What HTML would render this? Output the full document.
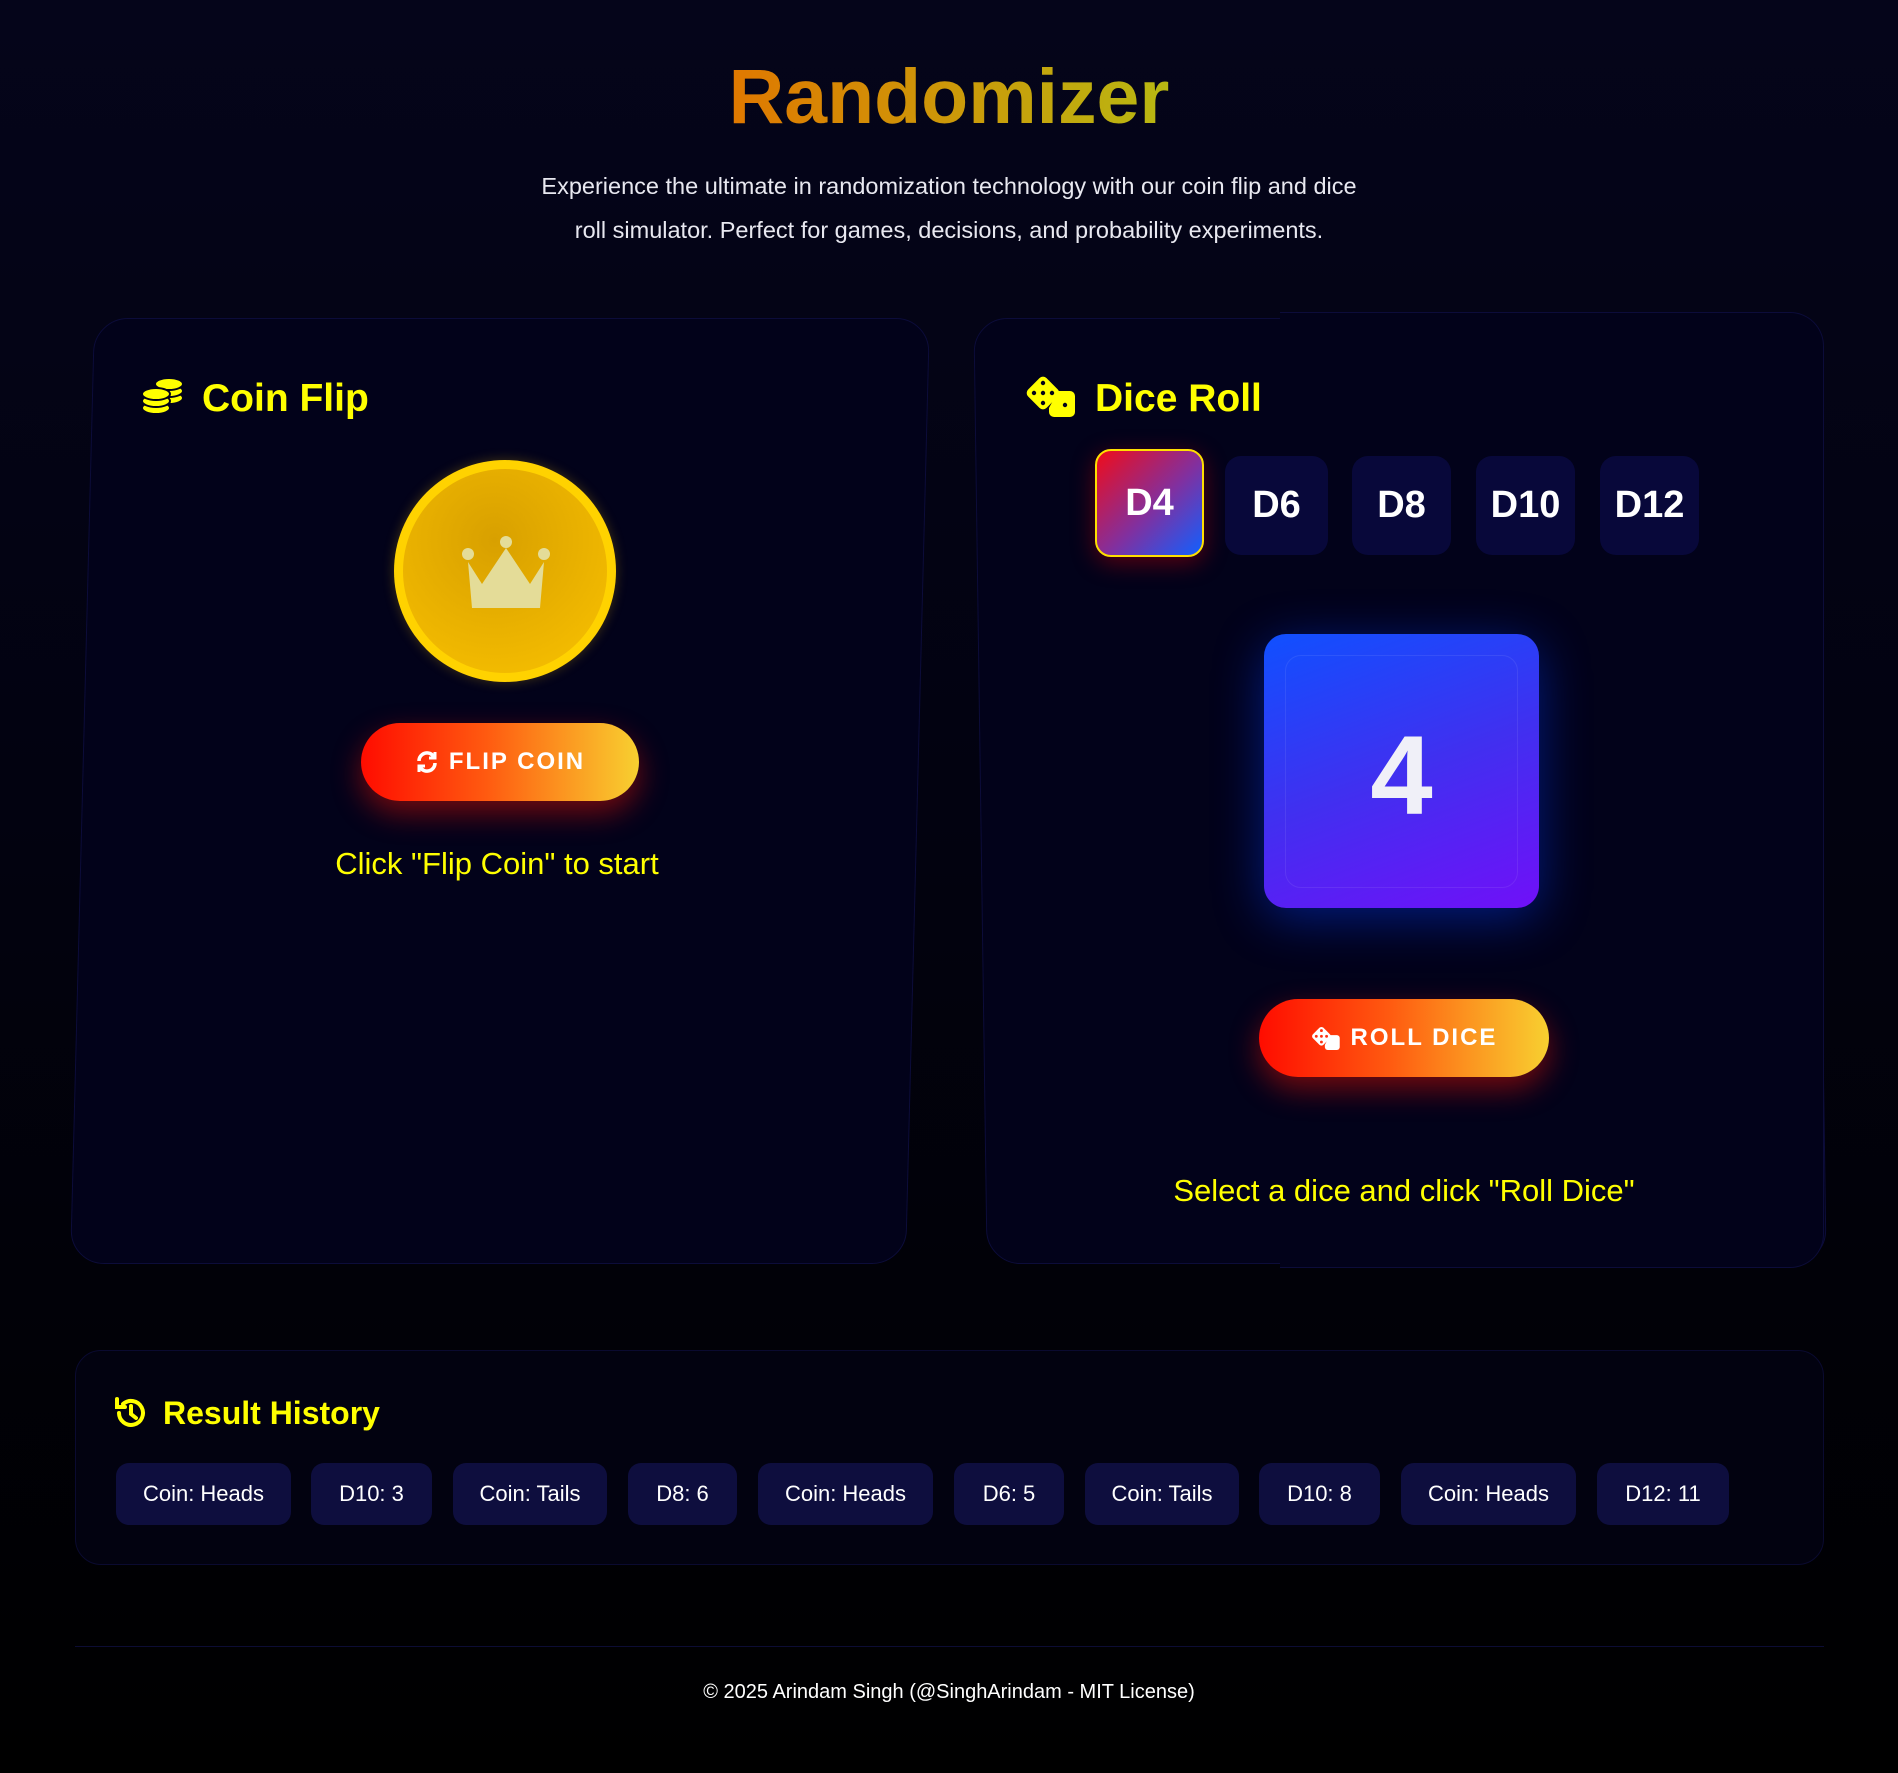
<!DOCTYPE html>
<html><head><meta charset="utf-8"><style>
*{margin:0;padding:0;box-sizing:border-box}
html,body{width:1898px;height:1773px;overflow:hidden}
body{background:linear-gradient(180deg,#05051a 0%,#020210 45%,#000 100%);font-family:"Liberation Sans",sans-serif;position:relative;color:#fff}
.a{position:absolute}
h1{position:absolute;left:0;width:1898px;top:52px;text-align:center;font-size:77px;font-weight:bold;line-height:90px}
h1 span{background:linear-gradient(90deg,#e07800,#b8b812);-webkit-background-clip:text;background-clip:text;color:transparent}
.sub{left:399px;width:1100px;top:164px;text-align:center;font-size:23.5px;line-height:44px;color:#e8e8f0;font-weight:300}
.card{background:#02021a;border:1.5px solid #0c0c3a;border-radius:34px}
.h2{font-size:39px;font-weight:bold;color:#ffff00;line-height:46px}
.btn{border-radius:40px;background:linear-gradient(90deg,#ff0c00,#ff5a10 45%,#f8d030);box-shadow:0 12px 30px rgba(255,20,0,.45);color:#fff;font-weight:bold;font-size:24px;letter-spacing:2px;display:flex;align-items:center;justify-content:center;gap:10px}
.dbtn{background:#08083a;border-radius:16px;color:#fff;font-weight:bold;font-size:38px;display:flex;align-items:center;justify-content:center}
.chip{position:absolute;top:1463px;height:62px;background:#0e0e3e;border-radius:13px;color:#fff;font-size:22px;display:flex;align-items:center;justify-content:center}
</style></head><body>
<h1><span>Randomizer</span></h1>
<div class="a sub">Experience the ultimate in randomization technology with our coin flip and dice<br>roll simulator. Perfect for games, decisions, and probability experiments.</div>

<!-- left card -->
<div class="a card" style="left:82px;top:318px;width:836px;height:946px;transform:skewX(-1.45deg)"></div>
<svg class="a" style="left:141px;top:374px" width="44" height="42" viewBox="0 0 44 42"><g fill="#ffff00" stroke="#02021a" stroke-width="2"><ellipse cx="28" cy="24" rx="14" ry="6"/><ellipse cx="28" cy="17" rx="14" ry="6"/><ellipse cx="28" cy="10" rx="14" ry="6"/><ellipse cx="15" cy="34" rx="14" ry="6"/><ellipse cx="15" cy="27" rx="14" ry="6"/><ellipse cx="15" cy="20" rx="14" ry="6"/></g></svg>
<div class="a h2" style="left:202px;top:376px">Coin Flip</div>
<div class="a" style="left:394px;top:460px;width:222px;height:222px;border-radius:50%;background:#ffd200;box-shadow:0 0 12px rgba(255,200,0,.25)"></div>
<div class="a" style="left:403px;top:469px;width:204px;height:204px;border-radius:50%;background:radial-gradient(circle at 45% 35%,#d8a000,#f0b800 70%,#f8c400)"></div>
<svg class="a" style="left:460px;top:534px" width="92" height="74" viewBox="0 0 92 74"><path d="M8 28 L22 50 L46 14 L70 50 L84 28 L80 74 L12 74 Z" fill="#e4dc98"/><circle cx="8" cy="20" r="6" fill="#e4dc98"/><circle cx="46" cy="8" r="6" fill="#e4dc98"/><circle cx="84" cy="20" r="6" fill="#e4dc98"/></svg>
<div class="a btn" style="left:361px;top:723px;width:278px;height:78px"><svg width="24" height="24" viewBox="0 0 24 24" fill="none" stroke="#fff" stroke-width="3.5"><path d="M4 11 A8 8 0 0 1 19 7"/><path d="M20 13 A8 8 0 0 1 5 17"/><path d="M20 2 v6 h-6" stroke-width="3"/><path d="M4 22 v-6 h6" stroke-width="3"/></svg>FLIP COIN</div>
<div class="a" style="left:197px;width:600px;top:846px;text-align:center;color:#ffff00;font-size:31px">Click "Flip Coin" to start</div>

<!-- right card -->
<div class="a card" style="left:980px;top:318px;width:840px;height:946px;transform:skewX(0.8deg)"></div>
<div class="a card" style="left:1280px;top:312px;width:544px;height:956px;border-left:none;border-radius:0 34px 34px 0"></div>
<svg class="a" style="left:1025px;top:375px" width="52" height="42" viewBox="0 0 52 42"><rect x="5" y="5" width="26" height="26" rx="5" fill="#ffff00" transform="rotate(45 18 18)"/><g fill="#02021a"><circle cx="18" cy="8" r="2.2"/><circle cx="9" cy="18" r="2.2"/><circle cx="18" cy="18" r="2.2"/><circle cx="27" cy="18" r="2.2"/><circle cx="18" cy="28" r="2.2"/></g><path d="M33 16 h12 a5 5 0 0 1 5 5 v16 a5 5 0 0 1 -5 5 h-16 a5 5 0 0 1 -5 -5 v-4 z" fill="#ffff00"/><circle cx="40" cy="30" r="2.2" fill="#02021a"/></svg>
<div class="a h2" style="left:1095px;top:376px">Dice Roll</div>
<div class="a dbtn" style="left:1095px;top:449px;width:109px;height:108px;background:linear-gradient(135deg,#f00c1a,#8030a0 55%,#1060ff);border:2px solid #ffe000;box-shadow:0 6px 24px rgba(255,0,0,.35)">D4</div>
<div class="a dbtn" style="left:1225px;top:456px;width:103px;height:99px">D6</div>
<div class="a dbtn" style="left:1352px;top:456px;width:99px;height:99px">D8</div>
<div class="a dbtn" style="left:1476px;top:456px;width:99px;height:99px">D10</div>
<div class="a dbtn" style="left:1600px;top:456px;width:99px;height:99px">D12</div>
<div class="a" style="left:1264px;top:634px;width:275px;height:274px;border-radius:22px;background:linear-gradient(160deg,#1050ff,#4030f0 50%,#7010f8);box-shadow:0 10px 50px rgba(0,60,255,.45)"></div>
<div class="a" style="left:1285px;top:655px;width:233px;height:233px;border-radius:16px;border:1.5px solid rgba(255,255,255,.08)"></div>
<div class="a" style="left:1264px;top:706px;width:275px;text-align:center;font-size:112px;font-weight:bold;line-height:140px;color:#f0f0f8">4</div>
<div class="a btn" style="left:1259px;top:999px;width:290px;height:78px"><svg width="30" height="24" viewBox="0 0 52 42"><rect x="5" y="5" width="26" height="26" rx="5" fill="#fff" transform="rotate(45 18 18)"/><g fill="#ff3010"><circle cx="18" cy="8" r="2.5"/><circle cx="9" cy="18" r="2.5"/><circle cx="18" cy="18" r="2.5"/><circle cx="27" cy="18" r="2.5"/><circle cx="18" cy="28" r="2.5"/></g><path d="M33 16 h12 a5 5 0 0 1 5 5 v16 a5 5 0 0 1 -5 5 h-16 a5 5 0 0 1 -5 -5 v-4 z" fill="#fff"/></svg>ROLL DICE</div>
<div class="a" style="left:1100px;width:608px;top:1173px;text-align:center;color:#ffff00;font-size:31px">Select a dice and click "Roll Dice"</div>

<!-- history -->
<div class="a" style="left:75px;top:1350px;width:1749px;height:215px;border:1.5px solid #0a0a30;border-radius:26px;background:#020210"></div>
<svg class="a" style="left:113px;top:1395px" width="36" height="36" viewBox="0 0 36 36" fill="none" stroke="#ffff00" stroke-width="4" stroke-linecap="round"><path d="M6 18 A12 12 0 1 0 10 9"/><path d="M4 4 v8 h8"/><path d="M18 11 v8 l5 4"/></svg>
<div class="a" style="left:163px;top:1395px;font-size:32px;font-weight:bold;color:#ffff00">Result History</div>
<div class="chip" style="left:116px;width:175px">Coin: Heads</div>
<div class="chip" style="left:311px;width:121px">D10: 3</div>
<div class="chip" style="left:453px;width:154px">Coin: Tails</div>
<div class="chip" style="left:628px;width:109px">D8: 6</div>
<div class="chip" style="left:758px;width:175px">Coin: Heads</div>
<div class="chip" style="left:954px;width:110px">D6: 5</div>
<div class="chip" style="left:1085px;width:154px">Coin: Tails</div>
<div class="chip" style="left:1259px;width:121px">D10: 8</div>
<div class="chip" style="left:1401px;width:175px">Coin: Heads</div>
<div class="chip" style="left:1597px;width:132px">D12: 11</div>

<div class="a" style="left:75px;top:1646px;width:1749px;height:1px;background:#0c0c34"></div>
<div class="a" style="left:0;width:1898px;top:1681px;text-align:center;font-size:20px;color:#fff">© 2025 Arindam Singh (@SinghArindam - MIT License)</div>
</body></html>
